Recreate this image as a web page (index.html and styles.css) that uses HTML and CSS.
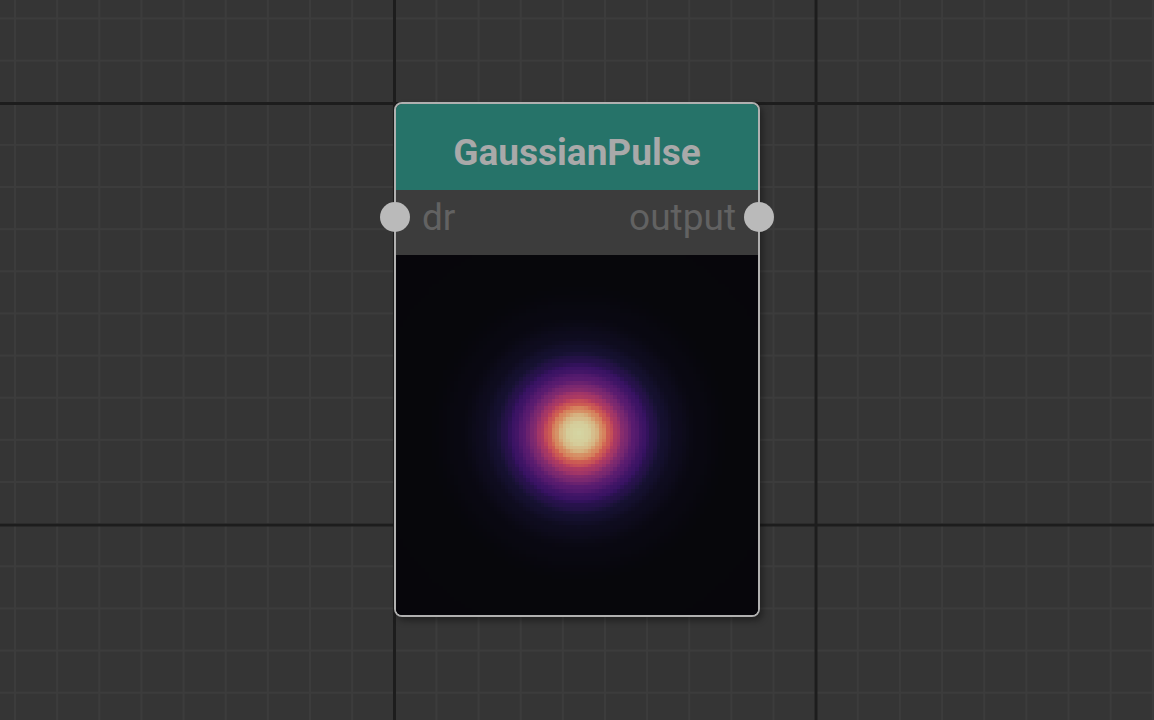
FILE: index.html
```html
<!DOCTYPE html>
<html>
<head>
<meta charset="utf-8">
<link rel="stylesheet" href="styles.css">
</head>
<body>
<div class="canvas">
  <div class="node">
    <div class="node-header">GaussianPulse</div>
    <div class="node-ports">
      <div class="port port-in"><span class="port-dot"></span><span class="port-label">dr</span></div>
      <div class="port port-out"><span class="port-label">output</span><span class="port-dot"></span></div>
    </div>
    <div class="node-preview"><canvas id="heat" width="100" height="100"></canvas></div>
  </div>
</div>
<script src="script.js"></script>
</body>
</html>
```

FILE: styles.css
```css
html, body {
  margin: 0;
  padding: 0;
  width: 100%;
  height: 100%;
  overflow: hidden;
}
body {
  font-family: Roboto, "Liberation Sans", sans-serif;
  background: #353535;
}
.canvas {
  position: relative;
  width: 1154px;
  height: 720px;
  background-color: #353535;
  background-image:
    linear-gradient(to right, #1d1d1d 2.5px, transparent 2.5px),
    linear-gradient(to bottom, #1d1d1d 2.5px, transparent 2.5px),
    linear-gradient(to right, #3c3c3c 2px, transparent 2px),
    linear-gradient(to bottom, #3c3c3c 2px, transparent 2px);
  background-size:
    421.5px 421.5px,
    421.5px 421.5px,
    42.15px 42.15px,
    42.15px 42.15px;
  background-position:
    393px 0,
    0 102px,
    14px 0,
    0 17.5px;
}
.node {
  position: absolute;
  left: 394px;
  top: 102px;
  width: 362px;
  border: 2px solid #b0b0b0;
  border-radius: 8px;
  background: #3c3c3c;
  box-shadow: 3px 4px 6px rgba(0, 0, 0, 0.35);
  display: flex;
  flex-direction: column;
}
.node-header {
  height: 86px;
  background: #267369;
  border-radius: 6px 6px 0 0;
  color: #a9a9a9;
  font-weight: 700;
  font-size: 37px;
  display: flex;
  align-items: center;
  justify-content: center;
  padding-top: 10px;
  box-sizing: border-box;
}
.node-ports {
  height: 65px;
  background: #3c3c3c;
  display: flex;
  justify-content: space-between;
  align-items: flex-start;
  position: relative;
}
.port {
  display: flex;
  align-items: flex-start;
  position: relative;
  height: 100%;
}
.port-label {
  color: #626262;
  font-size: 37px;
  line-height: 1;
  padding-top: 9px;
}
.port-in .port-label { padding-left: 26px; }
.port-out .port-label { padding-right: 22px; }
.port-dot {
  position: absolute;
  top: 12px;
  width: 30px;
  height: 30px;
  border-radius: 50%;
  background: #bababa;
}
.port-in .port-dot { left: -16px; }
.port-out .port-dot { right: -16px; }
.node-preview {
  height: 360px;
  background: #060609;
  border-radius: 0 0 6px 6px;
  overflow: hidden;
}
.node-preview canvas {
  display: block;
  width: 362px;
  height: 360px;
  image-rendering: pixelated;
}
```

FILE: script.js
```js
(function () {
  var cv = document.getElementById('heat');
  var ctx = cv.getContext('2d');
  var N = 100;
  var img = ctx.createImageData(N, N);
  var stops = [
    [0.0, 0, 0, 4], [0.1, 20, 14, 54], [0.2, 59, 15, 112], [0.3, 100, 26, 128],
    [0.4, 140, 41, 129], [0.5, 183, 55, 121], [0.6, 222, 73, 104], [0.7, 247, 112, 92],
    [0.8, 254, 159, 109], [0.9, 254, 207, 146], [1.0, 252, 253, 191]
  ];
  function magma(v) {
    v = Math.max(0, Math.min(1, v));
    for (var i = 1; i < stops.length; i++) {
      if (v <= stops[i][0]) {
        var a = stops[i - 1], b = stops[i];
        var t = (v - a[0]) / (b[0] - a[0]);
        return [a[1] + (b[1] - a[1]) * t, a[2] + (b[2] - a[2]) * t, a[3] + (b[3] - a[3]) * t];
      }
    }
    return [252, 253, 191];
  }
  // radial profile (px -> value), measured from reference
  var prof = [[0, 1], [10, 0.98], [16, 0.93], [24, 0.8], [30, 0.67], [38, 0.53],
              [46, 0.41], [55, 0.3], [64, 0.22], [73, 0.15], [84, 0.09],
              [97, 0.05], [117, 0.02], [150, 0.005], [400, 0]];
  function profile(r) {
    for (var i = 1; i < prof.length; i++) {
      if (r <= prof[i][0]) {
        var a = prof[i - 1], b = prof[i];
        var t = (r - a[0]) / (b[0] - a[0]);
        t = t * t * (3 - 2 * t);
        return a[1] + (b[1] - a[1]) * t;
      }
    }
    return 0;
  }
  var cell = 3.6;
  var cx = 50.5, cy = 49.5;
  for (var y = 0; y < N; y++) {
    for (var x = 0; x < N; x++) {
      var dx = (x + 0.5 - cx) * cell, dy = (y + 0.5 - cy) * cell;
      var r = Math.sqrt(dx * dx + dy * dy);
      var c = magma(profile(r));
      var k = (y * N + x) * 4;
      img.data[k] = 6 + c[0] * 0.82;
      img.data[k + 1] = 6 + c[1] * 0.82;
      img.data[k + 2] = 6 + c[2] * 0.82;
      img.data[k + 3] = 255;
    }
  }
  ctx.putImageData(img, 0, 0);
})();
```
